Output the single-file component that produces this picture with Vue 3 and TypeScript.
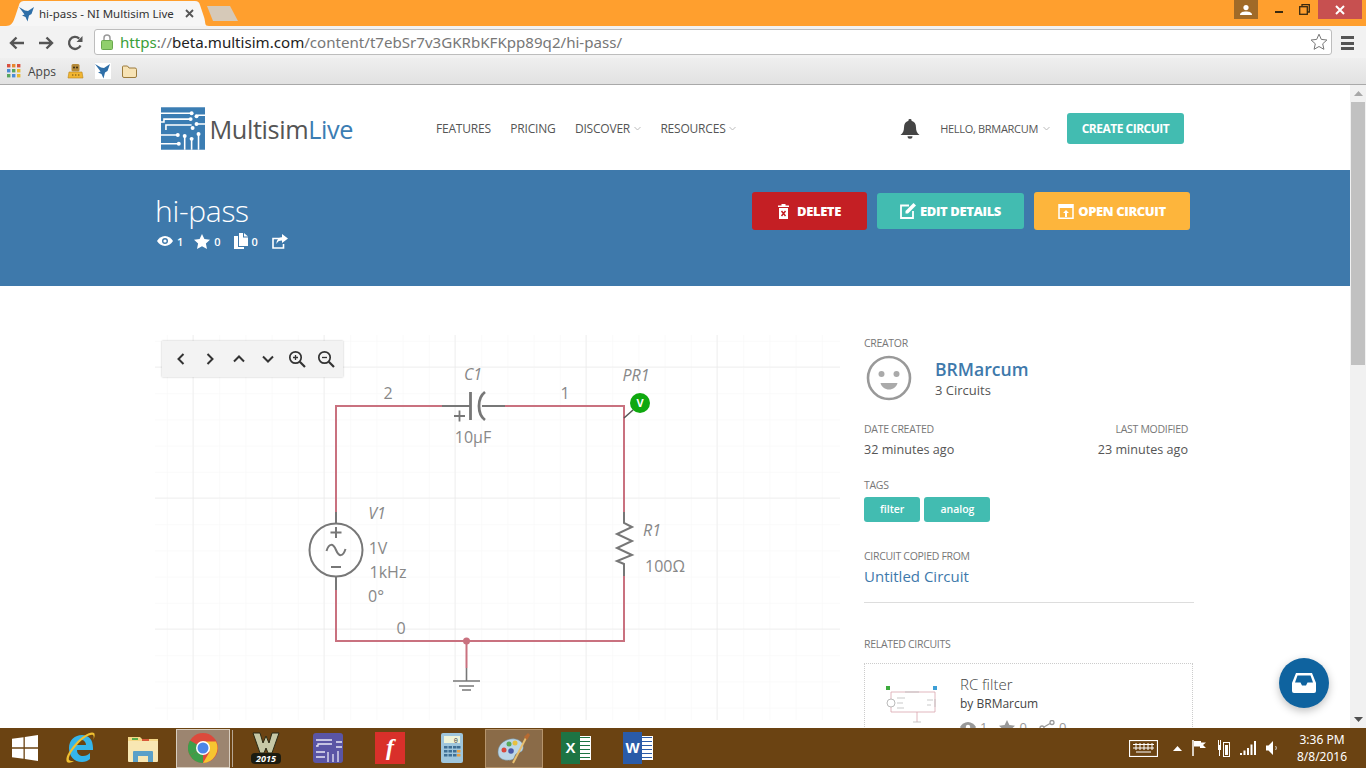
<script setup lang="ts">
const navItems = [
  { label: 'FEATURES', caret: false },
  { label: 'PRICING', caret: false },
  { label: 'DISCOVER', caret: true },
  { label: 'RESOURCES', caret: true },
]

const tags = ['filter', 'analog']

const canvasLabels = [
  { text: '2', x: 388, y: 399 },
  { text: 'C1', x: 473, y: 380, italic: true },
  { text: '1', x: 565, y: 399 },
  { text: 'PR1', x: 636, y: 381, italic: true },
  { text: '10µF', x: 473, y: 443 },
  { text: 'V1', x: 377, y: 519, italic: true },
  { text: '1V', x: 378, y: 554 },
  { text: '1kHz', x: 388, y: 578 },
  { text: '0°', x: 376, y: 602 },
  { text: '0', x: 401, y: 634 },
  { text: 'R1', x: 652, y: 536, italic: true },
  { text: '100Ω', x: 665, y: 572 },
]
</script>

<template>
  <div class="window">
    <div class="tabstrip">
      <div class="tab">
        <svg class="fav" width="16" height="16" viewBox="0 0 16 16">
          <path d="M0 1l6 3.500 3 .5 6-4-2.500 7L10 9.500 8.500 15.500 6.500 11 3 9.500l2.500-1z" fill="#2f6fa8" />
        </svg>
        <span class="tab-title">hi-pass - NI Multisim Live</span>
        <svg class="tab-x" width="9" height="9" viewBox="0 0 9 9">
          <path d="M1 1l7 7M8 1l-7 7" stroke="#555" stroke-width="1.8" />
        </svg>
      </div>
      <div class="newtab"></div>
      <div class="winctl">
        <div class="ctl-user">
          <svg width="12" height="10" viewBox="0 0 12 10">
            <circle cx="6" cy="2.6" r="2.6" fill="#fff" />
            <path d="M0 10c0-3 3-3.6 6-3.6s6 .6 6 3.6z" fill="#fff" />
          </svg>
        </div>
        <div class="ctl-min"><span></span></div>
        <div class="ctl-max">
          <svg width="11" height="11" viewBox="0 0 11 11" fill="none" stroke="#3a2a10" stroke-width="1.3">
            <rect x="0.7" y="2.7" width="7.6" height="7.6" />
            <path d="M3 2.5V.7h7.3V8H8.5" />
          </svg>
        </div>
        <div class="ctl-close">
          <svg width="10" height="10" viewBox="0 0 10 10">
            <path d="M1 1l8 8M9 1l-8 8" stroke="#fff" stroke-width="2" />
          </svg>
        </div>
      </div>
    </div>

    <div class="toolbar">
      <svg class="tb-icon" width="16" height="14" viewBox="0 0 16 14" fill="none" stroke="#555" stroke-width="2.4">
        <path d="M15 7H2M7.5 1.5L2 7l5.5 5.5" />
      </svg>
      <svg class="tb-icon" width="16" height="14" viewBox="0 0 16 14" fill="none" stroke="#555" stroke-width="2.4">
        <path d="M1 7h13M8.5 1.5L14 7l-5.5 5.5" />
      </svg>
      <svg class="tb-icon" width="16" height="16" viewBox="0 0 16 16" fill="none">
        <path d="M13.5 10.5A6 6 0 1 1 12.2 3.6" stroke="#555" stroke-width="2.3" />
        <path d="M15.5 1v6h-6z" fill="#555" />
      </svg>
      <div class="omnibox">
        <svg class="lock" width="12" height="16" viewBox="0 0 12 16">
          <path d="M3 7V4a3 3 0 0 1 6 0v3" fill="none" stroke="#9a9a9a" stroke-width="1.5" />
          <rect x="0.5" y="6.5" width="11" height="9" rx="1" fill="#90cf6c" stroke="#6aa84f" />
        </svg>
        <span class="url"><span class="url-https">https</span><span class="url-dim">://</span><span class="url-host">beta.multisim.com</span><span class="url-dim">/content/t7ebSr7v3GKRbKFKpp89q2/hi-pass/</span></span>
        <svg class="star" width="18" height="18" viewBox="0 0 18 18">
          <path d="M9 1.2l2.3 5.2 5.6.6-4.2 3.800 1.200 5.500L9 13.500l-4.900 2.800 1.200-5.500L1.100 7l5.600-.6z" fill="#fff" stroke="#777" />
        </svg>
      </div>
      <div class="menu"><span></span><span></span><span></span></div>
    </div>

    <div class="bookmarks">
      <svg width="14" height="14" viewBox="0 0 14 14">
        <rect x="0" y="0" width="3.4" height="3.4" fill="#d9503f" />
        <rect x="5" y="0" width="3.4" height="3.4" fill="#e8862e" />
        <rect x="10" y="0" width="3.4" height="3.4" fill="#d9503f" />
        <rect x="0" y="5" width="3.4" height="3.4" fill="#4a8bd6" />
        <rect x="5" y="5" width="3.4" height="3.4" fill="#58a55c" />
        <rect x="10" y="5" width="3.4" height="3.4" fill="#e8b82e" />
        <rect x="0" y="10" width="3.4" height="3.4" fill="#58a55c" />
        <rect x="5" y="10" width="3.4" height="3.4" fill="#4a8bd6" />
        <rect x="10" y="10" width="3.4" height="3.4" fill="#e8b82e" />
      </svg>
      <span class="apps">Apps</span>
      <svg class="bm-robot" width="17" height="16" viewBox="0 0 17 16">
        <path d="M1 15l1-6h13l1 6z" fill="#f2b632" stroke="#b98518" stroke-width="0.6" />
        <rect x="4.5" y="1" width="8" height="7.5" rx="1.5" fill="#b58a3a" />
        <circle cx="7" cy="4.5" r="1" fill="#3a2a10" />
        <circle cx="10" cy="4.5" r="1" fill="#3a2a10" />
        <path d="M5 12h1.4M8 12h1.4M11 12h1.4" stroke="#6b4a10" stroke-width="1.2" />
      </svg>
      <svg class="bm-ni" width="16" height="16" viewBox="0 0 16 16">
        <rect width="16" height="16" fill="#fff" />
        <path d="M0 1l6 3.500 3 .5 6-4-2.500 7L10 9.500 8.500 15.500 6.500 11 3 9.500l2.500-1z" fill="#2f6fa8" />
      </svg>
      <svg class="bm-folder" width="15" height="13" viewBox="0 0 15 13">
        <path d="M.5 11V2a1 1 0 0 1 1-1h4l1.5 2h6a1.500 1.500 0 0 1 1.500 1.500V11a1.500 1.500 0 0 1-1.500 1.500h-11A1.500 1.500 0 0 1 .5 11z" fill="#f7e3b5" stroke="#9c7b3c" />
      </svg>
    </div>

    <div class="viewport">
      <div class="page">
        <header class="site-header">
          <div class="wrap header-row">
            <div class="logo">
              <svg width="45" height="43" viewBox="0 0 45 43">
                <rect width="45" height="43" fill="#3b7db3" />
                <g fill="none" stroke="#fff" stroke-width="1.6">
                  <path d="M0 6h30M37 8h8M0 15h3V12h26M37 17h8M5 23V18h26" />
                  <path d="M0 28h16M0 37h17M24 43V30M31 43V33M38 43V28" />
                </g>
                <g fill="#fff">
                  <circle cx="31" cy="6" r="2" /><circle cx="36" cy="9" r="2" />
                  <circle cx="30" cy="12" r="2" /><circle cx="36" cy="17" r="2" />
                  <circle cx="32" cy="21" r="2" /><circle cx="17" cy="28" r="2" />
                  <circle cx="18" cy="37" r="2" /><circle cx="24" cy="29" r="2" />
                  <circle cx="31" cy="32" r="2" /><circle cx="38" cy="27" r="2" />
                </g>
              </svg>
              <span class="logo-text">Multisim<span class="logo-live">Live</span></span>
            </div>
            <nav class="nav">
              <a v-for="item in navItems" :key="item.label" class="nav-item">
                {{ item.label }}
                <svg v-if="item.caret" class="caret" width="7" height="5" viewBox="0 0 7 5" fill="none" stroke="#bbb">
                  <path d="M.5 1l3 3 3-3" />
                </svg>
              </a>
            </nav>
            <div class="header-right">
              <svg class="bell" width="20" height="20" viewBox="0 0 20 20">
                <path d="M10 0a1.500 1.500 0 0 1 1.500 1.800C14.500 2.600 16 5 16 8.500c0 3.500 1 5.500 3.500 7.500H.5C3 14 4 12 4 8.500 4 5 5.500 2.600 8.500 1.800A1.500 1.500 0 0 1 10 0z" fill="#444" />
                <path d="M7.500 17.200h5a2.500 2.500 0 0 1-5 0z" fill="#444" />
              </svg>
              <span class="hello">HELLO, BRMARCUM</span>
              <svg class="caret" width="7" height="5" viewBox="0 0 7 5" fill="none" stroke="#bbb">
                <path d="M.5 1l3 3 3-3" />
              </svg>
              <button class="create-btn">CREATE CIRCUIT</button>
            </div>
          </div>
        </header>

        <section class="banner">
          <div class="wrap banner-row">
            <div class="banner-left">
              <h1 class="title">hi-pass</h1>
              <div class="stats">
                <svg width="16" height="10" viewBox="0 0 16 10">
                  <path d="M8 0c3.500 0 6.300 2.200 8 5-1.700 2.800-4.500 5-8 5S1.700 7.800 0 5c1.700-2.800 4.500-5 8-5z" fill="#fff" />
                  <circle cx="8" cy="5" r="3" fill="#3e79ab" />
                  <circle cx="8" cy="5" r="1.600" fill="#fff" />
                </svg>
                <span class="stat-num stat-gap">1</span>
                <svg width="16" height="15" viewBox="0 0 16 15">
                  <path d="M8 0l2.400 5 5.600.7-4.100 3.800 1.100 5.500L8 12.300 3 15l1.100-5.500L0 5.700 5.600 5z" fill="#fff" />
                </svg>
                <span class="stat-num stat-gap">0</span>
                <svg class="stat-doc" width="14" height="16" viewBox="0 0 14 16">
                  <path d="M5 0h4v4.500h5V13H5z" fill="#fff" />
                  <path d="M10 0l4 3.500h-4z" fill="#fff" />
                  <path d="M0 3h4v11h6v2H0z" fill="#fff" />
                </svg>
                <span class="stat-num stat-gap">0</span>
                <svg class="stat-share" width="16" height="15" viewBox="0 0 16 15">
                  <path d="M11 4.500H1v9.500h10.500V10" fill="none" stroke="#fff" stroke-width="1.600" />
                  <path d="M10 0l6 4.500L10 9V6.500C7 6.500 5.500 7.500 4.500 10c0-4 2-6.500 5.500-6.700z" fill="#fff" />
                </svg>
              </div>
            </div>
            <div class="actions">
              <button class="act act-delete">
                <svg width="11" height="15" viewBox="0 0 11 15">
                  <path d="M0 1.500h3.500V0h4v1.500H11V3H0z" fill="#fff" />
                  <path d="M1 4h9v11H1z" fill="#fff" />
                  <path d="M3.500 7l4 5M7.500 7l-4 5" stroke="#c41f24" stroke-width="1.500" />
                </svg>
                DELETE
              </button>
              <button class="act act-edit">
                <svg width="16" height="16" viewBox="0 0 16 16">
                  <path d="M9 2.500H1v12.500h12V8" fill="none" stroke="#fff" stroke-width="1.800" />
                  <path d="M13.500 0L16 2.500 8 10.500H5.500V8z" fill="#fff" />
                </svg>
                EDIT DETAILS
              </button>
              <button class="act act-open">
                <svg width="16" height="15" viewBox="0 0 16 15">
                  <path d="M1 .8h14v13.400H1z" fill="none" stroke="#fff" stroke-width="1.500" />
                  <path d="M1 1h14v3H1z" fill="#fff" />
                  <path d="M8 6l3 3H9v4H7V9H5z" fill="#fff" />
                </svg>
                OPEN CIRCUIT
              </button>
            </div>
          </div>
        </section>

        <div class="wrap main-row">
          <div class="canvas">
            <svg class="schematic" width="685" height="385" viewBox="155 335 685 385">
              <defs>
                <pattern id="minor" x="193" y="367" width="26.2" height="26.2" patternUnits="userSpaceOnUse">
                  <path d="M0 0V26.200M0 0H26.200" fill="none" stroke="#f6f6f6" />
                </pattern>
                <pattern id="major" x="192.500" y="366.500" width="131" height="131" patternUnits="userSpaceOnUse">
                  <path d="M0 0V131M0 0H131" fill="none" stroke="#e4e4e4" />
                </pattern>
              </defs>
              <rect x="155" y="335" width="685" height="385" fill="url(#minor)" />
              <rect x="155" y="335" width="685" height="385" fill="url(#major)" />

              <g fill="none" stroke="#c9717f" stroke-width="2">
                <path d="M442 406H336V512M336 590V641H624V576M624 512V406H505" />
                <path d="M466.500 641V668" />
              </g>
              <circle cx="466.500" cy="641" r="3.500" fill="#c9717f" />

              <g fill="none" stroke="#777" stroke-width="2">
                <path d="M442 406H470M482 406H505" />
                <path d="M470.500 392V420M485 392C477 398 477 414 485 420" stroke-width="2.800" />
                <path d="M336 512V523M336 577V590" />
                <circle cx="336" cy="550" r="26.500" />
                <path d="M336 527V538M330.500 532.500H341.500M331 567H341" />
                <path d="M326.500 551C329 543 333 543 336 550S343 557 345.500 549" />
                <path d="M624 512V523L632 527 617 534 632 541 617 548 632 555 617 561 624 564V576" />
                <path d="M466.500 668V681M453 681H480M459 686H474M462 690H471" stroke-width="1.600" />
                <path d="M454 416H465M459.500 410.500V421.500" stroke-width="1.800" />
              </g>

              <path d="M624 418L633 410" stroke="#555" stroke-width="1.500" />
              <circle cx="640" cy="403" r="10" fill="#0fa80f" />
              <text class="probe" x="640" y="407">V</text>

              <text
                v-for="l in canvasLabels"
                :key="l.text"
                class="clabel"
                :class="{ italic: l.italic }"
                :x="l.x"
                :y="l.y"
              >{{ l.text }}</text>
            </svg>

            <div class="canvas-tools">
              <svg width="12" height="14" viewBox="0 0 12 14" fill="none" stroke="#333" stroke-width="2"><path d="M8.500 2L3.500 7l5 5" /></svg>
              <svg width="12" height="14" viewBox="0 0 12 14" fill="none" stroke="#333" stroke-width="2"><path d="M3.500 2l5 5-5 5" /></svg>
              <svg width="14" height="14" viewBox="0 0 14 14" fill="none" stroke="#333" stroke-width="2"><path d="M2 9.500l5-5 5 5" /></svg>
              <svg width="14" height="14" viewBox="0 0 14 14" fill="none" stroke="#333" stroke-width="2"><path d="M2 4.500l5 5 5-5" /></svg>
              <svg width="18" height="18" viewBox="0 0 18 18" fill="none" stroke="#333" stroke-width="1.700">
                <circle cx="7.500" cy="7.500" r="5.700" /><path d="M11.800 11.800L17 17" stroke-width="2.200" /><path d="M5 7.500h5M7.500 5v5" stroke-width="1.300" />
              </svg>
              <svg width="18" height="18" viewBox="0 0 18 18" fill="none" stroke="#333" stroke-width="1.700">
                <circle cx="7.500" cy="7.500" r="5.700" /><path d="M11.800 11.800L17 17" stroke-width="2.200" /><path d="M5 7.500h5" stroke-width="1.300" />
              </svg>
            </div>
          </div>

          <aside class="side">
            <div class="label label-creator">CREATOR</div>
            <div class="creator">
              <svg width="46" height="46" viewBox="0 0 46 46">
                <circle cx="23" cy="23" r="21" fill="#fff" stroke="#999" stroke-width="2.600" />
                <circle cx="15.500" cy="19" r="3" fill="#aaa" />
                <circle cx="30.500" cy="19" r="3" fill="#aaa" />
                <path d="M14.500 28h17c-1 4-4.500 6.500-8.500 6.500s-7.500-2.500-8.500-6.500z" fill="#aaa" />
              </svg>
              <div class="creator-info">
                <div class="creator-name">BRMarcum</div>
                <div class="creator-count">3 Circuits</div>
              </div>
            </div>

            <div class="dates">
              <div>
                <div class="label">DATE CREATED</div>
                <div class="date-value">32 minutes ago</div>
              </div>
              <div class="date-right">
                <div class="label">LAST MODIFIED</div>
                <div class="date-value">23 minutes ago</div>
              </div>
            </div>

            <div class="label label-tags">TAGS</div>
            <div class="tags">
              <span v-for="t in tags" :key="t" class="tag">{{ t }}</span>
            </div>

            <div class="label label-copied">CIRCUIT COPIED FROM</div>
            <div class="copied-link">Untitled Circuit</div>
            <hr class="rule" />

            <div class="label label-related">RELATED CIRCUITS</div>
            <div class="related-card">
              <svg class="thumb" width="62" height="42" viewBox="0 0 62 42">
                <g fill="none" stroke="#d9a5ad" stroke-width="0.800">
                  <path d="M8 8H52V28H8zM34 28V38" />
                </g>
                <circle cx="8" cy="19" r="4" fill="#fff" stroke="#aaa" stroke-width="0.800" />
                <rect x="3" y="2" width="4" height="4" fill="#3dab3d" />
                <rect x="50" y="2" width="4" height="4" fill="#3d9fd6" />
                <path d="M22 8h14M52 15v8M30 38h8M14 14h8M14 19h6M14 24h7M44 16h6M44 21h4" stroke="#bbb" stroke-width="0.800" />
              </svg>
              <div class="related-info">
                <div class="related-title">RC filter</div>
                <div class="related-by">by BRMarcum</div>
                <div class="related-stats">
                  <svg width="16" height="10" viewBox="0 0 16 10"><path d="M8 0c3.500 0 6.300 2.200 8 5-1.700 2.800-4.500 5-8 5S1.700 7.800 0 5c1.700-2.800 4.500-5 8-5z" fill="#999" /><circle cx="8" cy="5" r="2.200" fill="#fff" /></svg>
                  <span class="rs-num">1</span>
                  <svg width="16" height="15" viewBox="0 0 16 15"><path d="M8 0l2.400 5 5.600.7-4.100 3.800 1.100 5.500L8 12.300 3 15l1.100-5.500L0 5.700 5.600 5z" fill="#999" /></svg>
                  <span class="rs-num">0</span>
                  <svg width="16" height="14" viewBox="0 0 16 14" fill="none" stroke="#999" stroke-width="1.300"><circle cx="3" cy="8" r="2" /><circle cx="13" cy="2.500" r="2" /><circle cx="13" cy="12" r="2" /><path d="M5 7l6-3.500M5 9l6 2.500" /></svg>
                  <span class="rs-num">0</span>
                </div>
              </div>
            </div>
          </aside>
        </div>
      </div>

      <div class="scrollbar">
        <div class="sb-arrow">
          <svg width="9" height="5" viewBox="0 0 9 5"><path d="M4.500 0L9 5H0z" fill="#a8a8a8" /></svg>
        </div>
        <div class="sb-thumb"></div>
        <div class="sb-arrow sb-down">
          <svg width="9" height="5" viewBox="0 0 9 5"><path d="M0 0h9L4.500 5z" fill="#505050" /></svg>
        </div>
      </div>

      <button class="fab">
        <svg width="24" height="20" viewBox="0 0 24 20">
          <path d="M4 0h16l4 10v8a2 2 0 0 1-2 2H2a2 2 0 0 1-2-2v-8z" fill="#fff" />
          <path d="M5.500 2.500h13l2.500 7h-5.500L14 12.500h-4L8.500 9.500H3z" fill="#0f639f" />
        </svg>
      </button>
    </div>

    <footer class="taskbar">
      <div class="start">
        <svg width="26" height="26" viewBox="0 0 26 26" fill="#fff">
          <path d="M0 3.800L11.500 2.200V12.300H0zM12.800 2L26 0V12.300H12.800zM0 13.700H11.500V23.800L0 22.200zM12.800 13.700H26V26L12.800 24z" />
        </svg>
      </div>
      <div class="slot">
        <svg width="30" height="32" viewBox="0 0 30 32">
          <path d="M3 16C3 8 9 3 16 3c7 0 11 5 11 13v2H11c0 4 3 6 6 6 3 0 5-1 7-3v6c-2 2-5 3-8 3C8 30 3 24 3 16zm8-3h9c0-3-2-5-4.500-5S11 10 11 13z" fill="#35b5ea" />
          <path d="M28 1C25-1 17 3 9 12 2 20-1 27 1 30c1 1 4 1 7-1-2 0-4 0-5-1-1-3 2-8 8-15C17 6 24 2 27 3c1 1 1 3 0 5 2-3 2-6 1-7z" fill="#f0c030" />
        </svg>
      </div>
      <div class="slot">
        <svg width="32" height="30" viewBox="0 0 32 30">
          <path d="M1 4h12l2 2h16v10H1z" fill="#f5d888" />
          <path d="M1 8h30v20a1 1 0 0 1-1 1H2a1 1 0 0 1-1-1z" fill="#f8e7b3" />
          <path d="M5 5h6v2H5z" fill="#5aae4f" /><path d="M15 6h7v2h-7z" fill="#d85a3a" />
          <path d="M6 29V19a1 1 0 0 1 1-1h18a1 1 0 0 1 1 1v10h-5v-6H11v6z" fill="#5aa0c8" />
        </svg>
      </div>
      <div class="slot slot-active">
        <svg width="30" height="30" viewBox="0 0 30 30">
          <circle cx="15" cy="15" r="15" fill="#dc4a3c" />
          <path d="M15 15L2 22.500A15 15 0 0 0 15 30z" fill="#3d9e4a" />
          <path d="M2 22.500A15 15 0 0 1 2 7.500L15 15z" fill="#3d9e4a" />
          <path d="M15 8.500h13A15 15 0 0 1 15 30l6.500-11z" fill="#f6c531" />
          <circle cx="15" cy="15" r="7" fill="#fff" />
          <circle cx="15" cy="15" r="5.500" fill="#4a86e8" />
        </svg>
      </div>
      <div class="slot">
        <svg width="32" height="34" viewBox="0 0 32 34">
          <path d="M3 2h7l3 10 3-7 3 7 3-10h7l-7 20H18l-2-5-2 5H10z" fill="#c7c9a6" stroke="#2b2b16" />
          <rect x="1" y="22" width="30" height="11" rx="4" fill="#1c1c10" />
          <text class="w-year" x="16" y="31">2015</text>
        </svg>
      </div>
      <div class="slot">
        <svg width="30" height="30" viewBox="0 0 30 30">
          <rect width="30" height="30" rx="3" fill="#5a55a5" />
          <g fill="none" stroke="#e8e6f5" stroke-width="1.300">
            <path d="M3 7h16M23 9h6M3 13h2V11h14M23 14h6M3 19h9M3 24h9M15 29V19M20 29V21M25 29V18" />
          </g>
        </svg>
      </div>
      <div class="slot">
        <div class="f-app">f</div>
      </div>
      <div class="slot">
        <svg width="22" height="30" viewBox="0 0 22 30">
          <rect width="22" height="30" rx="2" fill="#9fc6dc" />
          <rect x="3" y="3" width="16" height="7" fill="#eef3d8" />
          <text class="calc-num" x="17" y="9.500">0</text>
          <g fill="#3f6f94">
            <rect x="3" y="13" width="3.500" height="2.500" /><rect x="7.500" y="13" width="3.500" height="2.500" /><rect x="12" y="13" width="3.500" height="2.500" /><rect x="16" y="13" width="3.500" height="2.500" />
            <rect x="3" y="17" width="3.500" height="2.500" /><rect x="7.500" y="17" width="3.500" height="2.500" /><rect x="12" y="17" width="3.500" height="2.500" /><rect x="16" y="17" width="3.500" height="2.500" fill="#e8a040" />
            <rect x="3" y="21" width="3.500" height="2.500" /><rect x="7.500" y="21" width="3.500" height="2.500" /><rect x="12" y="21" width="3.500" height="2.500" /><rect x="16" y="21" width="3.500" height="2.500" fill="#e8a040" />
          </g>
        </svg>
      </div>
      <div class="slot slot-paint">
        <svg width="34" height="32" viewBox="0 0 34 32">
          <path d="M1 20C1 11 10 6 18 7c6 1 9 5 8 10-1 4-5 3-7 5s-1 5-5 6C7 29 1 27 1 20z" fill="#bcd6e6" stroke="#6b8ea5" stroke-width="0.500" />
          <circle cx="7" cy="18" r="2.500" fill="#d8483c" /><circle cx="12" cy="12" r="2.500" fill="#58a858" />
          <circle cx="18" cy="11" r="2.500" fill="#e8c040" /><circle cx="14" cy="19" r="2.800" fill="#4a5aa8" />
          <path d="M30 4L16 31" stroke="#e8c070" stroke-width="2" /><path d="M27 5l4-4 2 2-3 5z" fill="#b86a30" />
        </svg>
      </div>
      <div class="slot">
        <div class="office">
          <div class="office-tile office-x">X</div>
          <div class="office-doc office-grid"></div>
        </div>
      </div>
      <div class="slot">
        <div class="office">
          <div class="office-tile office-w">W</div>
          <div class="office-doc office-lines"></div>
        </div>
      </div>

      <div class="tray">
        <svg class="tray-kbd" width="29" height="17" viewBox="0 0 29 17" fill="none" stroke="#fff">
          <rect x="0.500" y="0.500" width="28" height="16" stroke-width="1.200" />
          <path d="M4 4.500h21M4 8h21M7 12h15M7 3v7M11 3v7M15 3v7M19 3v7M23 3v7" />
        </svg>
        <svg class="tray-caret" width="9" height="5" viewBox="0 0 9 5"><path d="M4.500 0L9 5H0z" fill="#fff" /></svg>
        <svg class="tray-i" width="15" height="16" viewBox="0 0 15 16">
          <path d="M1 0v16" stroke="#fff" stroke-width="1.500" /><path d="M2 1h7v1.500h5L11 5l3 3H8V6.500H2z" fill="#fff" />
        </svg>
        <svg class="tray-i" width="13" height="17" viewBox="0 0 13 17">
          <rect x="6.500" y="2.500" width="6" height="14" fill="none" stroke="#fff" /><rect x="8" y="5" width="3" height="10" fill="#fff" />
          <rect x="1" y="5" width="3" height="5" fill="#fff" /><path d="M2.500 10v6M1.500 0v5M3.500 0v5" stroke="#fff" />
        </svg>
        <svg class="tray-i" width="16" height="14" viewBox="0 0 16 14" fill="#fff">
          <rect x="0" y="12" width="2" height="2" /><rect x="3.500" y="9.500" width="2" height="4.500" /><rect x="7" y="7" width="2" height="7" /><rect x="10.500" y="3.500" width="2" height="10.500" /><rect x="14" y="0" width="2" height="14" />
        </svg>
        <svg class="tray-i" width="12" height="14" viewBox="0 0 12 14">
          <path d="M0 4.500h2.500L7 0v14L2.500 9.500H0z" fill="#fff" /><path d="M9.500 5c1 1 1 3 0 4" stroke="#ddd" fill="none" />
        </svg>
        <div class="clock">
          <div>3:36 PM</div>
          <div>8/8/2016</div>
        </div>
      </div>
    </footer>
  </div>
</template>

<style scoped>
.window {
  width: 1366px;
  height: 768px;
  display: flex;
  flex-direction: column;
  overflow: hidden;
  font-family: "Open Sans", "Liberation Sans", sans-serif;
  color: #555;
}

/* browser chrome */
.tabstrip {
  height: 26px;
  flex: none;
  background: #ff9f2e;
  display: flex;
  align-items: flex-end;
  padding-left: 6px;
}
.tab {
  width: 203px;
  height: 25px;
  background: #f6f6f6;
  clip-path: path("M0 25C5 25 7 22 9 16L13 4C14 1 15 0 19 0H189C192 0 193 1 194 4L198 16C200 22 198 25 203 25Z");
  display: flex;
  align-items: center;
  padding-left: 13px;
  box-sizing: border-box;
  font-family: "Noto Sans", "Open Sans", sans-serif;
  font-size: 11.500px;
  color: #333;
}
.tab-title {
  margin-left: 4px;
  white-space: nowrap;
  width: 135px;
}
.tab-x {
  margin-left: 11px;
}
.fav {
  flex: none;
}
.newtab {
  width: 31px;
  height: 15px;
  margin: 0 0 5px -2px;
  background: #d6c9b8;
  clip-path: polygon(0 0, 23px 0, 100% 100%, 6px 100%);
}
.winctl {
  margin-left: auto;
  align-self: flex-start;
  display: flex;
  height: 19px;
  margin-right: 4px;
}
.ctl-user {
  width: 24px;
  background: #a06a28;
  display: flex;
  align-items: center;
  justify-content: center;
}
.ctl-min {
  width: 41px;
  display: flex;
  align-items: flex-end;
  justify-content: center;
  padding-bottom: 6px;
  box-sizing: border-box;
}
.ctl-min span {
  width: 8px;
  height: 2px;
  background: #3a2a10;
}
.ctl-max {
  width: 11px;
  margin-right: 8px;
  display: flex;
  align-items: center;
}
.ctl-close {
  width: 44px;
  background: #c75050;
  display: flex;
  align-items: center;
  justify-content: center;
}
.toolbar {
  height: 32px;
  flex: none;
  background: #f2f2f2;
  display: flex;
  align-items: center;
  padding-left: 9px;
  padding-top: 2px;
  box-sizing: border-box;
}
.tb-icon {
  margin-right: 13px;
  flex: none;
}
.omnibox {
  width: 1238px;
  height: 26px;
  margin-left: -2px;
  margin-top: -2px;
  background: #fff;
  border: 1px solid #bdbdbd;
  border-radius: 3px;
  box-sizing: border-box;
  display: flex;
  align-items: center;
  padding-left: 6px;
}
.lock {
  flex: none;
}
.url {
  margin-left: 7px;
  font-size: 15.100px;
  font-family: "Noto Sans", "Open Sans", sans-serif;
  white-space: nowrap;
}
.url-https {
  color: #3aa03a;
}
.url-dim {
  color: #777;
}
.url-host {
  color: #222;
}
.star {
  margin-left: auto;
  margin-right: 3px;
}
.menu {
  margin-left: 9px;
  display: flex;
  flex-direction: column;
  gap: 2.500px;
}
.menu span {
  width: 13px;
  height: 3px;
  background: #555;
}
.bookmarks {
  height: 27px;
  flex: none;
  box-sizing: border-box;
  background: linear-gradient(#efefef, #e2e2e2);
  border-bottom: 1px solid #a9a9a9;
  display: flex;
  align-items: center;
  padding-left: 7px;
}
.apps {
  margin-left: 7px;
  font-size: 12px;
  color: #444;
}
.bm-robot {
  margin-left: 11px;
}
.bm-ni {
  margin-left: 11px;
}
.bm-folder {
  margin-left: 11px;
}

/* page */
.viewport {
  position: relative;
  flex: 1;
  min-height: 0;
  display: flex;
  overflow: hidden;
  background: #fff;
}
.page {
  flex: 1;
  min-width: 0;
  overflow: hidden;
}
.wrap {
  width: 1040px;
  margin: 0 auto;
}
.site-header {
  height: 85px;
}
.header-row {
  height: 85px;
  padding-top: 2px;
  box-sizing: border-box;
  display: flex;
  align-items: center;
}
.logo {
  margin-left: 6px;
  display: flex;
  align-items: center;
  gap: 4px;
  width: 192px;
  margin-top: -1px;
}
.logo-text {
  font-size: 25.300px;
  color: #555;
  letter-spacing: -0.400px;
  white-space: nowrap;
  margin-top: 1px;
}
.logo-live {
  color: #3b7db3;
}
.nav {
  margin-left: 83px;
  display: flex;
  gap: 19.400px;
}
.nav-item {
  font-size: 12px;
  color: #555;
  letter-spacing: -0.200px;
  white-space: nowrap;
}
.caret {
  margin-left: 1px;
  vertical-align: 2px;
}
.header-right {
  margin-left: auto;
  margin-right: 11px;
  display: flex;
  align-items: center;
}
.bell {
  margin-right: 20px;
}
.hello {
  font-size: 11px;
  color: #555;
  letter-spacing: -0.300px;
  margin-right: 4px;
  white-space: nowrap;
}
.create-btn {
  margin-left: 17px;
  width: 117px;
  height: 31px;
  background: #42bcb1;
  color: #fff;
  border: 0;
  border-radius: 3px;
  font: 700 12px "Open Sans", sans-serif;
  letter-spacing: -0.500px;
  padding: 0;
  white-space: nowrap;
}
.banner {
  height: 116px;
  background: #3e79ab;
}
.banner-row {
  display: flex;
  justify-content: space-between;
  padding: 22px 5px 0 0;
  box-sizing: border-box;
}
.title {
  margin: 0;
  font-size: 30px;
  font-weight: 300;
  line-height: 38px;
  color: #fff;
  letter-spacing: -0.300px;
}
.stats {
  margin: 3px 0 0 2px;
  display: flex;
  align-items: center;
  gap: 4px;
  color: #fff;
}
.stat-num {
  font-size: 11px;
  font-weight: 600;
}
.stat-gap {
  margin-right: 7px;
}
.stat-doc {
  margin-left: 2px;
}
.stat-share {
  margin-left: 3px;
}
.actions {
  display: flex;
  align-items: center;
  gap: 10px;
  height: 38px;
}
.act {
  height: 38px;
  border: 0;
  border-radius: 3px;
  color: #fff;
  font: 800 13px "Open Sans", sans-serif;
  letter-spacing: -0.400px;
  display: flex;
  align-items: center;
  justify-content: center;
  gap: 4px;
  padding: 0;
  white-space: nowrap;
}
.act-delete {
  width: 115px;
  background: #c41f24;
  gap: 8px;
}
.act-edit {
  width: 147px;
  height: 36px;
  background: #42bcb1;
}
.act-open {
  width: 156px;
  background: #fdb53c;
}
.main-row {
  display: flex;
  padding-top: 49px;
}
.canvas {
  position: relative;
  width: 685px;
  height: 385px;
  flex: none;
}
.schematic {
  display: block;
}
.clabel {
  font-family: "Open Sans", sans-serif;
  font-size: 16px;
  fill: #888;
  text-anchor: middle;
}
.clabel.italic {
  font-style: italic;
}
.probe {
  font-family: "Open Sans", sans-serif;
  font-size: 11px;
  font-weight: 700;
  fill: #fff;
  text-anchor: middle;
}
.canvas-tools {
  position: absolute;
  left: 7px;
  top: 6px;
  width: 181px;
  height: 36px;
  background: #f3f3f3;
  box-shadow: 0 0 2px rgba(0, 0, 0, 0.25);
  display: grid;
  grid-template-columns: repeat(6, 29px);
  justify-items: center;
  align-items: center;
  padding-left: 4px;
  box-sizing: border-box;
}
.side {
  width: 330px;
  margin-left: 24px;
  flex: none;
}
.label {
  font-size: 10.500px;
  line-height: 14px;
  color: #777;
  letter-spacing: -0.300px;
}
.label-creator {
  margin-top: 1px;
}
.creator {
  display: flex;
  margin-top: 5px;
  margin-left: 2px;
}
.creator-info {
  margin-left: 23px;
}
.creator-name {
  font-size: 17.600px;
  font-weight: 600;
  line-height: 24px;
  color: #3e79ab;
  margin-top: 2px;
}
.creator-count {
  font-size: 13px;
  line-height: 18px;
  color: #555;
}
.dates {
  width: 324px;
  margin-top: 21px;
  display: flex;
  justify-content: space-between;
}
.date-right {
  text-align: right;
}
.date-value {
  margin-top: 5px;
  font-size: 12.600px;
  line-height: 18px;
  color: #555;
}
.label-tags {
  margin-top: 19px;
}
.tags {
  margin-top: 5px;
  display: flex;
  gap: 4px;
}
.tag {
  height: 25px;
  padding: 0 16px;
  border-radius: 3px;
  background: #42bcb1;
  color: #fff;
  font-size: 10.500px;
  font-weight: 600;
  line-height: 24px;
}
.label-copied {
  margin-top: 27px;
}
.copied-link {
  margin-top: 2px;
  font-size: 15px;
  line-height: 22px;
  color: #3e79ab;
}
.rule {
  margin: 15px 0 0;
  border: 0;
  border-top: 1px solid #ddd;
}
.label-related {
  margin-top: 34px;
}
.related-card {
  margin-top: 12px;
  width: 329px;
  height: 120px;
  box-sizing: border-box;
  border: 1px dotted #ccc;
  display: flex;
}
.thumb {
  margin: 20px 0 0 18px;
  flex: none;
}
.related-info {
  margin-left: 15px;
  margin-top: 10px;
}
.related-title {
  font-size: 15px;
  font-weight: 300;
  line-height: 20px;
  color: #444;
}
.related-by {
  font-size: 12px;
  line-height: 20px;
  color: #444;
}
.related-stats {
  margin-top: 4px;
  display: flex;
  align-items: center;
  gap: 4px;
}
.rs-num {
  font-size: 13px;
  color: #999;
  margin-right: 8px;
}
.scrollbar {
  width: 16px;
  flex: none;
  background: #f1f1f1;
  display: flex;
  flex-direction: column;
  align-items: center;
}
.sb-arrow {
  height: 17px;
  display: flex;
  align-items: center;
  justify-content: center;
}
.sb-down {
  margin-top: auto;
}
.sb-thumb {
  width: 14px;
  height: 263px;
  background: #c1c1c1;
}
.fab {
  position: absolute;
  left: 1279px;
  top: 573px;
  width: 50px;
  height: 50px;
  border: 0;
  padding: 0;
  border-radius: 50%;
  background: #0f639f;
  box-shadow: 0 3px 8px rgba(0, 0, 0, 0.25);
  display: flex;
  align-items: center;
  justify-content: center;
}

/* windows taskbar */
.taskbar {
  height: 40px;
  flex: none;
  background: #6b4312;
  display: flex;
  align-items: center;
}
.start {
  width: 50px;
  display: flex;
  justify-content: center;
}
.slot {
  width: 62px;
  height: 40px;
  flex: none;
  display: flex;
  align-items: center;
  justify-content: center;
  box-sizing: border-box;
}
.slot-active {
  width: 54px;
  height: 39px;
  margin-left: 2px;
  margin-right: 5px;
  background: #9c8570;
  border: 1px solid #d8cdbf;
  box-shadow: 3px 0 0 -1px #6b4312, 4px 0 0 -1px #b7a794;
}
.slot-paint {
  width: 58px;
  height: 39px;
  background: #8a6b48;
  border: 1px solid #b5946c;
  margin: 0 2px;
}
.w-year {
  font-family: "Open Sans", sans-serif;
  font-size: 9px;
  font-weight: 700;
  font-style: italic;
  fill: #fff;
  text-anchor: middle;
}
.calc-num {
  font-family: "Liberation Mono", monospace;
  font-size: 7px;
  fill: #444;
  text-anchor: end;
}
.f-app {
  width: 30px;
  height: 32px;
  background: #d9302a;
  color: #fff;
  font: 700 24px/30px "Liberation Serif", serif;
  font-style: italic;
  text-align: center;
}
.office {
  position: relative;
  width: 30px;
  height: 32px;
}
.office-tile {
  position: absolute;
  left: 0;
  top: 0;
  width: 19px;
  height: 32px;
  color: #fff;
  font: 700 15px/32px "Liberation Sans", sans-serif;
  text-align: center;
  z-index: 1;
}
.office-x {
  background: #1d7444;
}
.office-w {
  background: #2a5ba8;
}
.office-doc {
  position: absolute;
  right: 0;
  top: 4px;
  width: 15px;
  height: 24px;
  background: #fff;
}
.office-grid {
  background: repeating-linear-gradient(#1d7444 0 1px, #fff 1px 4px);
  border: 1px solid #fff;
  box-sizing: border-box;
}
.office-lines {
  background: repeating-linear-gradient(#2a5ba8 0 1px, #fff 1px 4px);
  border: 1px solid #fff;
  box-sizing: border-box;
}
.tray {
  margin-left: auto;
  display: flex;
  align-items: center;
  color: #fff;
}
.tray-caret {
  margin-left: 15px;
}
.tray-i {
  margin-left: 10px;
}
.clock {
  width: 76px;
  margin-left: 6px;
  margin-right: 6px;
  text-align: center;
  font-family: "Noto Sans", "Open Sans", sans-serif;
  font-size: 12px;
  line-height: 17px;
}
</style>

<style>
html,
body {
  margin: 0;
  background: #fff;
}
</style>
